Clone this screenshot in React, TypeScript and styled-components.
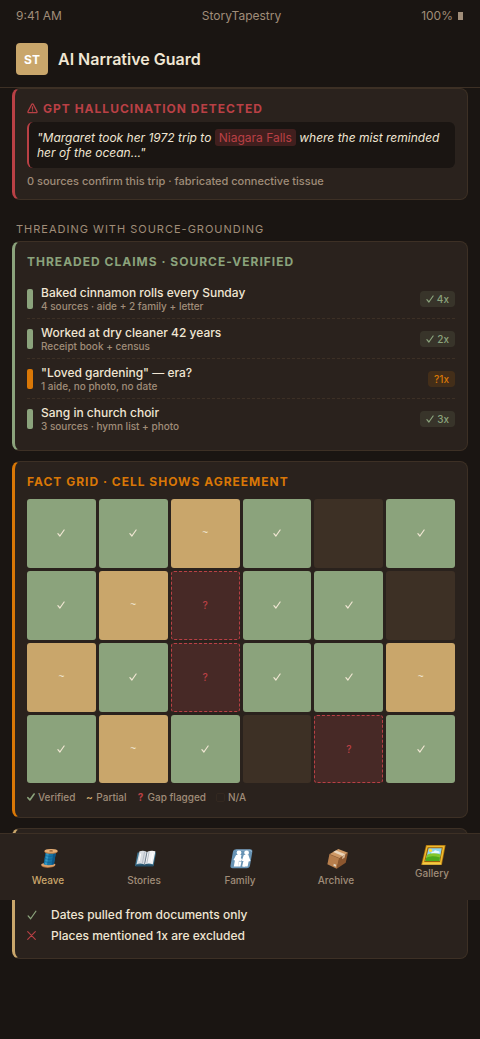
import React from "react";
import styled, { createGlobalStyle } from "styled-components";

const color = {
  bg: "#1a1512",
  panel: "#2a221d",
  line: "#3d3025",
  cream: "#f0e6d3",
  muted: "#a08d79",
  gold: "#c9a66b",
  green: "#8ba37c",
  red: "#b94045",
  orange: "#d97706",
};

const GlobalStyle = createGlobalStyle`
  * { box-sizing: border-box; }
  body {
    margin: 0;
    background: ${color.bg};
    color: ${color.cream};
    font-family: Inter, "Liberation Sans", sans-serif;
    font-size: 12px;
    line-height: 15px;
  }
  h1, h2, p, ul { margin: 0; padding: 0; }
  ul { list-style: none; }
`;

const Page = styled.div`
  position: relative;
  padding-bottom: 80px;
`;

const StatusBar = styled.div`
  display: flex;
  justify-content: space-between;
  padding: 8px 16px;
  color: ${color.muted};
`;

const Battery = styled.span`
  display: flex;
  align-items: center;
  gap: 5px;
  padding-right: 1px;
  &::after {
    content: "";
    width: 5px;
    height: 8px;
    background: ${color.muted};
  }
`;

const Header = styled.header`
  display: flex;
  align-items: center;
  gap: 10px;
  padding: 12px 16px;
  border-bottom: 1px solid ${color.line};
`;

const Logo = styled.div`
  display: grid;
  place-items: center;
  width: 32px;
  height: 32px;
  border-radius: 4px;
  background: ${color.gold};
  color: #fff;
  font-weight: 700;
`;

const Title = styled.h1`
  font-size: 16px;
  line-height: 20px;
  font-weight: 600;
`;

const Main = styled.main`
  display: flex;
  flex-direction: column;
  gap: 10px;
  padding: 0 12px;
`;

const Card = styled.section<{ $accent: string }>`
  padding: 12px;
  border: 1px solid ${color.line};
  border-left: 3px solid ${(p) => p.$accent};
  border-radius: 8px;
  background: ${color.panel};
`;

const RulesCard = styled(Card)`
  display: flex;
  flex-direction: column;
  justify-content: flex-end;
  min-height: 131px;
`;

const CardTitle = styled.h2<{ $tone: string; $tight?: boolean }>`
  display: flex;
  align-items: center;
  gap: 5px;
  margin-bottom: ${(p) => (p.$tight ? 6 : 10)}px;
  color: ${(p) => p.$tone};
  font-size: 12px;
  line-height: 15px;
  font-weight: 700;
  letter-spacing: 1px;
`;

const Quote = styled.p`
  padding: 8px;
  border-left: 2px solid ${color.red};
  border-radius: 6px;
  background: ${color.bg};
  font-style: italic;
`;

const Flag = styled.span`
  padding: 1px 4px;
  border-radius: 3px;
  background: rgba(185, 64, 69, 0.25);
  color: ${color.red};
  font-style: normal;
`;

const Footnote = styled.p`
  margin-top: 8px;
  color: ${color.muted};
  font-size: 11px;
  line-height: 11px;
  font-weight: 500;
`;

const SectionLabel = styled.p`
  padding: 12px 4px 4px;
  margin-bottom: -10px;
  color: ${color.muted};
  font-size: 11px;
  letter-spacing: 1px;
`;

const Claim = styled.li`
  display: flex;
  align-items: center;
  gap: 8px;
  padding: 6px 0;
  & + & { border-top: 1px dashed ${color.line}; }
`;

const Thread = styled.span<{ $tone: string }>`
  width: 6px;
  height: 20px;
  border-radius: 2px;
  background: ${(p) => p.$tone};
`;

const ClaimText = styled.div`
  flex: 1;
  font-weight: 500;
`;

const ClaimSource = styled.div`
  color: ${color.muted};
  font-size: 10px;
  line-height: 12px;
`;

const Pill = styled.span<{ $warn?: boolean }>`
  display: flex;
  align-items: center;
  gap: 3px;
  padding: 2px 6px;
  border-radius: 4px;
  background: ${(p) => (p.$warn ? "rgba(217, 119, 6, 0.15)" : "rgba(139, 163, 124, 0.15)")};
  color: ${(p) => (p.$warn ? color.orange : color.green)};
  font-size: 10px;
  line-height: 12px;
  font-weight: 500;
`;

type CellKind = "ok" | "part" | "gap" | "none";

const cellFill: Record<CellKind, string> = {
  ok: color.green,
  part: color.gold,
  gap: "#472926",
  none: "#3d3025",
};

const Grid = styled.div`
  display: grid;
  grid-template-columns: repeat(6, 1fr);
  gap: 3px;
`;

const Cell = styled.div<{ $kind: CellKind }>`
  display: grid;
  place-items: center;
  aspect-ratio: 1;
  border: ${(p) => (p.$kind === "gap" ? `1px dashed ${color.red}` : "none")};
  border-radius: 3px;
  background: ${(p) => cellFill[p.$kind]};
  color: ${(p) => (p.$kind === "gap" ? color.red : color.cream)};
  font-family: ${(p) => (p.$kind === "part" ? '"Liberation Sans", sans-serif' : "inherit")};
  font-size: 10px;
  line-height: 12px;
  font-weight: 500;
`;

const Legend = styled.div`
  display: flex;
  gap: 10px;
  margin-top: 6px;
  color: ${color.muted};
  font-size: 10px;
  line-height: 16px;
  font-weight: 500;
`;

const LegendItem = styled.span`
  display: flex;
  align-items: center;
  gap: 3px;
`;

const Mark = styled.b<{ $tone: string }>`
  display: grid;
  place-items: center;
  min-width: 8px;
  color: ${(p) => p.$tone};
`;

const EmptySwatch = styled.span`
  width: 9px;
  height: 9px;
  border: 1px solid #332820;
  border-radius: 2px;
`;

const Rule = styled.li`
  display: flex;
  align-items: center;
  gap: 8px;
  padding: 3px 0;
  font-weight: 500;
`;

const RuleMark = styled.span<{ $tone: string }>`
  display: flex;
  width: 16px;
  color: ${(p) => p.$tone};
`;

const Nav = styled.nav`
  position: absolute;
  right: 0;
  bottom: 139px;
  left: 0;
  display: flex;
  height: 67px;
  border-top: 1px solid ${color.line};
  background: ${color.panel};
`;

const NavLink = styled.a<{ $active?: boolean; $raised?: boolean }>`
  flex: 1;
  display: flex;
  flex-direction: column;
  align-items: center;
  gap: ${(p) => (p.$raised ? 0 : 3)}px;
  padding-top: ${(p) => (p.$raised ? 9 : 13)}px;
  color: ${(p) => (p.$active ? color.gold : color.muted)};
  font-size: 10px;
  line-height: 12px;
  font-weight: 500;
  text-decoration: none;
`;

const Art = styled.svg`
  display: block;
  width: 28px;
  height: 24px;
`;

const Check = ({ size = 8, weight = 1.2 }: { size?: number; weight?: number }) => (
  <svg width={size} height={size} viewBox="0 0 8 8" fill="none" stroke="currentColor" strokeWidth={weight} strokeLinecap="round" strokeLinejoin="round" role="img" aria-label="verified">
    <path d="M.9 4.7 2.9 7 7.1 1" />
  </svg>
);

const Cross = () => (
  <svg width="9" height="9" viewBox="0 0 9 9" fill="none" stroke="currentColor" strokeWidth="1.1" strokeLinecap="round" role="img" aria-label="excluded">
    <path d="M.7.7 8.3 8.3M8.3.7.7 8.3" />
  </svg>
);

const WarningIcon = () => (
  <svg width="11" height="11" viewBox="0 0 11 11" fill="none" stroke="currentColor" strokeLinejoin="round" strokeLinecap="round" aria-hidden="true">
    <path d="M4.8 1.3 1 8.5Q.7 9.6 1.7 9.6H9.3Q10.3 9.6 10 8.5L6.2 1.3Q5.5.5 4.8 1.3Z" strokeWidth="1.3" />
    <path d="M5.5 3.8V6.2M5.5 7.8V7.9" strokeWidth="1.2" />
  </svg>
);

const Spool = () => (
  <Art viewBox="0 0 28 24" aria-hidden="true">
    <path d="M7.2 17.6Q7 20.9 13.6 20.9Q21 20.8 21.4 17.6Z" fill="#a96b38" />
    <ellipse cx="14.3" cy="17.8" rx="7.1" ry="2.2" fill="#dda36d" />
    <path d="M11.6 5H22L19.9 17.2Q14.5 19.4 9.6 17.2Z" fill="#1674a4" />
    <path d="M12.6 5H15L13 18L10.8 17.6Z" fill="#3498c4" />
    <path d="M19.5 5H22L19.9 17.2L17.5 18Z" fill="#0c5686" />
    <path d="M11 8.5Q15.5 10.5 21 8.5M10.5 11.5Q14.5 13.4 20.5 11.5M10 14.5Q14.5 16.5 20.1 14.5" fill="none" stroke="#0b5b8d" strokeWidth=".6" />
    <ellipse cx="17" cy="4.5" rx="6.6" ry="2.3" fill="#b97840" />
    <ellipse cx="17.1" cy="3.9" rx="6.5" ry="1.9" fill="#e4ae76" />
    <ellipse cx="17.1" cy="3.9" rx="1.9" ry=".6" fill="#835127" />
  </Art>
);

const Book = () => (
  <Art viewBox="0 0 28 24" aria-hidden="true">
    <path d="M7.5 5.5H26L23.5 19H5Z" fill="#3c728d" />
    <path d="M6 18L15 17L23.5 18L23.3 19.5H5.4Z" fill="#254d66" />
    <path d="M9.5 4.3Q13.5 3.1 17 5L14.5 17.6Q10.5 15.6 6.5 17.2Z" fill="#d9dde3" />
    <path d="M17 5Q21.2 3 25.4 4.3L22.8 17.2Q18.2 15.6 14.5 17.6Z" fill="#f1f2f4" />
    <path d="M14.7 4.3L12.3 16.4M19.2 4.3L16.8 16.4" stroke="#b8bec8" strokeWidth="1" />
    <path d="M17 5L14.5 17.6" stroke="#72808f" strokeWidth="1" />
    <path d="M10.7 6.5 9.2 14M22.7 6.3 21.2 14.5" stroke="#fff" strokeWidth="1" />
  </Art>
);

const Family = () => (
  <Art viewBox="0 0 28 24" aria-hidden="true">
    <g transform="translate(1.5 0)">
      <path d="M8.7 2.3H22.6Q25.3 2.3 24.8 5L22.5 18.5Q22 21.2 19.3 21.2H5.2Q2.5 21.2 3 18.5L5.4 5Q5.9 2.3 8.7 2.3Z" fill="#6793b4" />
      <path d="M8.8 3.2H22.3Q24.2 3.2 23.9 5" fill="none" stroke="#9dbdd3" strokeWidth=".8" />
      <g fill="#fff">
        <circle cx="11.5" cy="5.8" r="2.4" />
        <circle cx="19.1" cy="5.8" r="2.4" />
        <path d="M8.6 8.1H14L12.9 13.2 11.5 13.5 10.5 19.6H6.3L7.4 13.5 6 13Z" />
        <path d="M16.3 8.1H20.9L23 14 21.1 14.5 20.1 19.6H15.6L16.5 14.5 14.3 13.8Z" />
        <circle cx="12.8" cy="12.5" r="1.6" />
        <circle cx="17.2" cy="12.5" r="1.6" />
        <path d="M11.3 14.5H14L12.9 19.6H10.5ZM15.8 14.5H18.5L17.5 19.6H14.6Z" />
      </g>
    </g>
  </Art>
);

const Parcel = () => (
  <Art viewBox="0 0 28 24" aria-hidden="true">
    <g transform="translate(2 0)">
      <path d="M5.4 7.2 15.3 11.2 12.7 21.7 3.4 17.3Z" fill="#b77e4c" />
      <path d="M15.3 11.2 24 5.7 21.7 15.8 12.7 21.7Z" fill="#8c572f" />
      <path d="M5.4 7.2 14.3 2 24 5.7 15.3 11.2Z" fill="#cf9966" />
      <path d="M9.2 5 12 3.4 21.4 7.3 18.6 9.1Z" fill="#ead5bb" />
      <path d="M18.6 9.1 21.4 7.3 20.7 10.5 18 12.2Z" fill="#d5b391" />
      <path d="M5.4 7.2 15.3 11.2 12.7 21.7" fill="none" stroke="#9b6337" strokeWidth=".5" />
      <path d="M9.8 16.8 12.2 17.8 11.8 19.8 9.4 18.7Z" fill="#e0d4c1" />
    </g>
  </Art>
);

const Frame = () => (
  <Art viewBox="0 0 28 24" aria-hidden="true">
    <g transform="translate(1.5 0)">
      <path d="M6.5 2H26.2L22.4 22H1.6Z" fill="#a56d10" />
      <path d="M7.1 2.7H25.3L21.7 21.2H2.6Z" fill="#efbb2d" />
      <path d="M8.1 4.3H23.3L20.5 19H4.7Z" fill="#97600d" />
      <path d="M9.1 5.2H22.3L19.8 18H6Z" fill="#8dd5ed" />
      <path d="M7.5 11.8Q14 8.4 21 11.6L19.8 18H6Z" fill="#84c62d" />
      <path d="M6.8 14.7Q12 11.7 20.5 14.5L19.8 18H6Z" fill="#4ea91b" />
      <circle cx="11" cy="7.4" r="1.6" fill="#ffdc38" />
      <path d="M11.5 10.3Q12 8 14.3 8.5Q15.5 6.3 17.7 8Q20.5 7.5 20.2 10.3Z" fill="#e8f8ff" />
      <path d="M2.9 21H21.7" stroke="#ffe16a" strokeWidth=".8" />
    </g>
  </Art>
);

const claims = [
  { text: "Baked cinnamon rolls every Sunday", source: "4 sources · aide + 2 family + letter", count: "4x" },
  { text: "Worked at dry cleaner 42 years", source: "Receipt book + census", count: "2x" },
  { text: "\"Loved gardening\" — era?", source: "1 aide, no photo, no date", count: "?1x", warn: true },
  { text: "Sang in church choir", source: "3 sources · hymn list + photo", count: "3x" },
];

const cells: CellKind[] = [
  "ok", "ok", "part", "ok", "none", "ok",
  "ok", "part", "gap", "ok", "ok", "none",
  "part", "ok", "gap", "ok", "ok", "part",
  "ok", "part", "ok", "none", "gap", "ok",
];

const glyph: Record<CellKind, React.ReactNode> = { ok: <Check />, part: "~", gap: "?", none: "" };

const tabs = [
  { label: "Weave", Icon: Spool, active: true },
  { label: "Stories", Icon: Book },
  { label: "Family", Icon: Family },
  { label: "Archive", Icon: Parcel },
  { label: "Gallery", Icon: Frame, raised: true },
];

export default function App() {
  return (
    <Page>
      <GlobalStyle />
      <StatusBar>
        <span>9:41 AM</span>
        <span>StoryTapestry</span>
        <Battery>100%</Battery>
      </StatusBar>
      <Header>
        <Logo>ST</Logo>
        <Title>AI Narrative Guard</Title>
      </Header>
      <Main>
        <Card $accent={color.red}>
          <CardTitle $tone={color.red} $tight>
            <WarningIcon />
            GPT HALLUCINATION DETECTED
          </CardTitle>
          <Quote>
            "Margaret took her 1972 trip to <Flag>Niagara Falls</Flag> where the mist reminded her of the ocean..."
          </Quote>
          <Footnote>0 sources confirm this trip · fabricated connective tissue</Footnote>
        </Card>

        <SectionLabel>THREADING WITH SOURCE-GROUNDING</SectionLabel>

        <Card $accent={color.green}>
          <CardTitle $tone={color.green}>THREADED CLAIMS · SOURCE-VERIFIED</CardTitle>
          <ul>
            {claims.map((c) => (
              <Claim key={c.text}>
                <Thread $tone={c.warn ? color.orange : color.green} />
                <ClaimText>
                  {c.text}
                  <ClaimSource>{c.source}</ClaimSource>
                </ClaimText>
                <Pill $warn={c.warn}>
                  {!c.warn && <Check />}
                  {c.count}
                </Pill>
              </Claim>
            ))}
          </ul>
        </Card>

        <Card $accent={color.orange}>
          <CardTitle $tone={color.orange}>FACT GRID · CELL SHOWS AGREEMENT</CardTitle>
          <Grid>
            {cells.map((kind, i) => (
              <Cell key={i} $kind={kind}>{glyph[kind]}</Cell>
            ))}
          </Grid>
          <Legend>
            <LegendItem><Mark $tone={color.green}><Check weight={1.6} /></Mark>Verified</LegendItem>
            <LegendItem><Mark $tone={color.gold}>~</Mark>Partial</LegendItem>
            <LegendItem><Mark $tone={color.red}>?</Mark>Gap flagged</LegendItem>
            <LegendItem><EmptySwatch />N/A</LegendItem>
          </Legend>
        </Card>

        <RulesCard $accent={color.gold}>
          <ul>
            <Rule><RuleMark $tone={color.green}><Check size={10} weight={1} /></RuleMark>Dates pulled from documents only</Rule>
            <Rule><RuleMark $tone={color.red}><Cross /></RuleMark>Places mentioned 1x are excluded</Rule>
          </ul>
        </RulesCard>
      </Main>
      <Nav>
        {tabs.map(({ label, Icon, active, raised }) => (
          <NavLink key={label} href="#" $active={active} $raised={raised}>
            <Icon />
            {label}
          </NavLink>
        ))}
      </Nav>
    </Page>
  );
}
